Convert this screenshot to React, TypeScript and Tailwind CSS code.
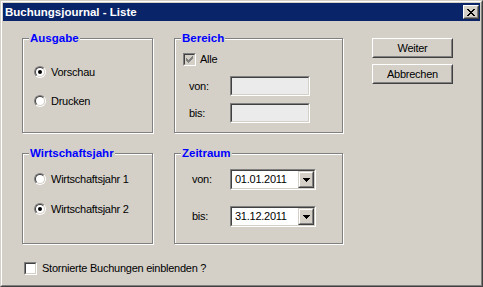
import React from 'react';

/* ---------- classic Win2000 bits ---------- */
function Radio({ checked }: { checked?: boolean }) {
  return (
    <span className="flex h-[12px] w-[12px] shrink-0 rounded-full border border-t-[#808080] border-l-[#808080] border-r-white border-b-white">
      <span className="flex flex-1 items-center justify-center rounded-full border border-t-[#404040] border-l-[#404040] border-r-[#d4d0c8] border-b-[#d4d0c8] bg-white">
        {checked && <span className="h-[4px] w-[4px] rounded-full bg-black" />}
      </span>
    </span>
  );
}

function CheckBox({ checked, disabled }: { checked?: boolean; disabled?: boolean }) {
  return (
    <span className="flex h-[13px] w-[13px] shrink-0 border border-t-[#808080] border-l-[#808080] border-r-white border-b-white">
      <span
        className={`flex flex-1 items-center justify-center border border-t-[#404040] border-l-[#404040] border-r-[#d4d0c8] border-b-[#d4d0c8] ${
          disabled ? 'bg-[#d4d0c8]' : 'bg-white'
        }`}
      >
        {checked && (
          <svg width="7" height="7" viewBox="0 0 7 7" shapeRendering="crispEdges" aria-hidden>
            <path
              d="M6 0h1v3H6zM5 1h1v3H5zM4 2h1v3H4zM3 3h1v3H3zM2 4h1v3H2zM1 3h1v3H1zM0 2h1v3H0z"
              fill={disabled ? '#808080' : '#000'}
            />
          </svg>
        )}
      </span>
    </span>
  );
}

function Sunken({ className, children, bg = 'bg-white' }: { className?: string; children?: React.ReactNode; bg?: string }) {
  return (
    <div className={`flex border border-t-[#808080] border-l-[#808080] border-r-white border-b-white ${className ?? ''}`}>
      <div className={`flex flex-1 items-center border border-t-[#404040] border-l-[#404040] border-r-[#d4d0c8] border-b-[#d4d0c8] ${bg}`}>
        {children}
      </div>
    </div>
  );
}

function Button({ label }: { label: string }) {
  return (
    <div className="flex h-[20px] w-[81px] border border-t-white border-l-white border-r-[#404040] border-b-[#404040]">
      <div className="flex flex-1 items-center justify-center border border-t-[#d4d0c8] border-l-[#d4d0c8] border-r-[#808080] border-b-[#808080]">
        {label}
      </div>
    </div>
  );
}

function Combo({ value }: { value: string }) {
  return (
    <Sunken className="h-[21px] w-[86px]">
      <span className="flex-1 pl-[3px]">{value}</span>
      <div className="flex h-full w-[16px] border border-t-[#d4d0c8] border-l-[#d4d0c8] border-r-[#404040] border-b-[#404040]">
        <div className="flex flex-1 items-center justify-center border border-t-white border-l-white border-r-[#808080] border-b-[#808080] bg-[#d4d0c8]">
          <svg width="7" height="4" viewBox="0 0 7 4" shapeRendering="crispEdges" aria-hidden>
            <path d="M0 0h7v1H0zM1 1h5v1H1zM2 2h3v1H2zM3 3h1v1H3z" fill="#000" />
          </svg>
        </div>
      </div>
    </Sunken>
  );
}

function Group({ title, className, children }: { title: string; className?: string; children?: React.ReactNode }) {
  return (
    <div
      className={`relative border border-[#808080] shadow-[inset_1px_1px_0_#fff,1px_1px_0_#fff] ${className ?? ''}`}
    >
      <span className="absolute -top-[8px] left-[6px] bg-[#d4d0c8] px-[1px] text-[11.5px] font-bold leading-[14px] tracking-normal text-[#0000ff]">
        {title}
      </span>
      {children}
    </div>
  );
}

/* ---------- dialog ---------- */
export default function App() {
  return (
    <div className="h-[287px] w-[483px] border border-t-[#d4d0c8] border-l-[#d4d0c8] border-r-[#404040] border-b-[#404040] bg-[#d4d0c8] font-['Liberation_Sans',Arial,sans-serif] text-[11px] leading-[13px] tracking-[-0.25px] text-black">
      <div className="flex h-full flex-col border border-t-white border-l-white border-r-[#808080] border-b-[#808080] p-[1px]">
        {/* title bar */}
        <div className="flex h-[18px] shrink-0 items-center justify-between bg-[#0a246a] pl-[2px] pr-[1px]">
          <span className="text-[11.5px] font-bold tracking-normal text-white">Buchungsjournal - Liste</span>
          <div className="flex h-[14px] w-[16px] border border-t-white border-l-white border-r-[#404040] border-b-[#404040]">
            <div className="flex flex-1 items-center justify-center border border-t-[#d4d0c8] border-l-[#d4d0c8] border-r-[#808080] border-b-[#808080] bg-[#d4d0c8]">
              <svg width="8" height="7" viewBox="0 0 8 7" shapeRendering="crispEdges" aria-hidden>
                <path
                  d="M0 0h2v1H0zM6 0h2v1H6zM1 1h2v1H1zM5 1h2v1H5zM2 2h4v1H2zM3 3h2v1H3zM2 4h4v1H2zM1 5h2v1H1zM5 5h2v1H5zM0 6h2v1H0zM6 6h2v1H6z"
                  fill="#000"
                />
              </svg>
            </div>
          </div>
        </div>

        {/* body */}
        <div className="flex flex-col pl-[19px] pt-[17px]">
          <div className="flex">
            {/* left column */}
            <div className="flex w-[131px] flex-col">
              <Group title="Ausgabe" className="h-[95px]">
                <div className="flex flex-col gap-[13px] pl-[11px] pt-[25px]">
                  <label className="flex h-[16px] items-center gap-[5px]">
                    <Radio checked />
                    Vorschau
                  </label>
                  <label className="flex h-[16px] items-center gap-[5px]">
                    <Radio />
                    Drucken
                  </label>
                </div>
              </Group>
              <Group title="Wirtschaftsjahr" className="mt-[20px] h-[91px]">
                <div className="flex flex-col gap-[14px] pl-[11px] pt-[17px]">
                  <label className="flex h-[16px] items-center gap-[5px]">
                    <Radio />
                    Wirtschaftsjahr 1
                  </label>
                  <label className="flex h-[16px] items-center gap-[5px]">
                    <Radio checked />
                    Wirtschaftsjahr 2
                  </label>
                </div>
              </Group>
            </div>

            {/* middle column */}
            <div className="ml-[21px] flex w-[169px] flex-col">
              <Group title="Bereich" className="h-[95px]">
                <div className="flex flex-col pl-[8px] pt-[14px]">
                  <label className="flex h-[13px] items-center gap-[4px]">
                    <CheckBox checked disabled />
                    Alle
                  </label>
                  <div className="mt-[10px] flex items-center pl-[6px]">
                    <span className="w-[41px]">von:</span>
                    <Sunken className="h-[20px] w-[80px]" bg="bg-[#ebebeb]" />
                  </div>
                  <div className="mt-[7px] flex items-center pl-[6px]">
                    <span className="w-[41px]">bis:</span>
                    <Sunken className="h-[20px] w-[80px]" bg="bg-[#ebebeb]" />
                  </div>
                </div>
              </Group>
              <Group title="Zeitraum" className="mt-[20px] h-[91px]">
                <div className="flex flex-col gap-[16px] pl-[17px] pt-[15px]">
                  <div className="flex items-center">
                    <span className="w-[38px]">von:</span>
                    <Combo value="01.01.2011" />
                  </div>
                  <div className="flex items-center">
                    <span className="w-[38px]">bis:</span>
                    <Combo value="31.12.2011" />
                  </div>
                </div>
              </Group>
            </div>

            {/* buttons */}
            <div className="ml-[29px] flex flex-col gap-[6px]">
              <Button label="Weiter" />
              <Button label="Abbrechen" />
            </div>
          </div>

          <label className="ml-[2px] mt-[18px] flex h-[13px] items-center gap-[5px]">
            <CheckBox />
            Stornierte Buchungen einblenden ?
          </label>
        </div>
      </div>
    </div>
  );
}
